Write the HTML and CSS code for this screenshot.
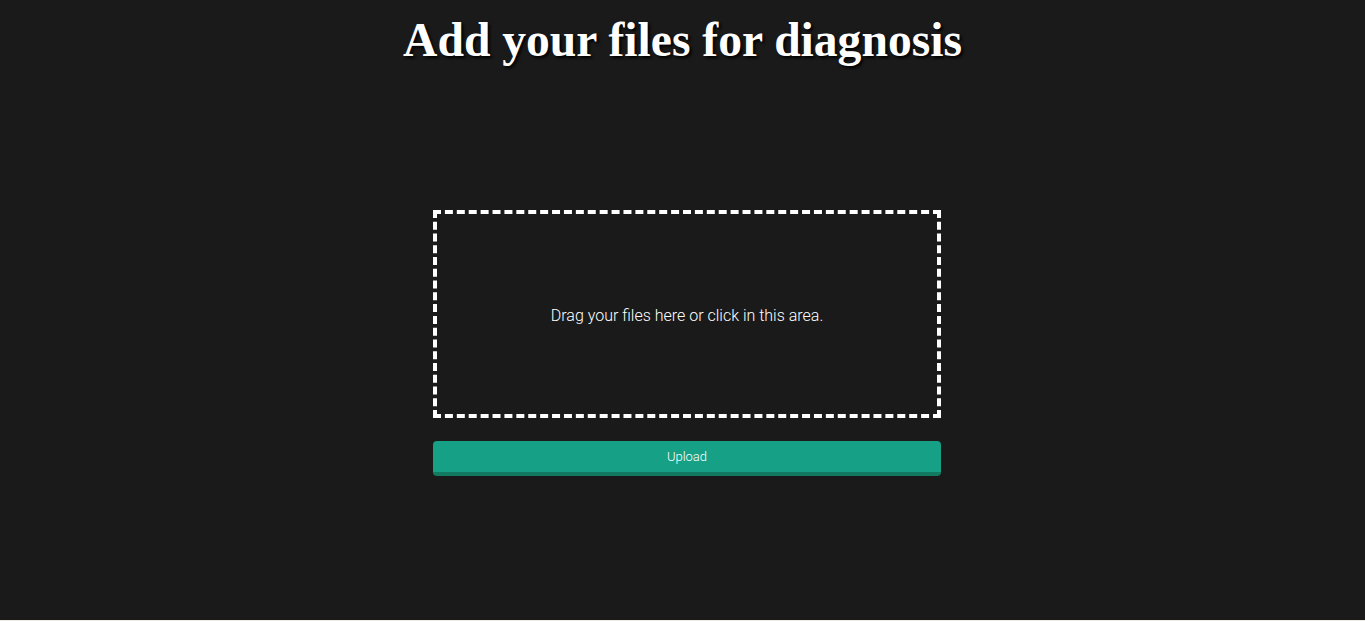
FILE: index.html
```html
<!DOCTYPE html>
<html>
<head>
<meta charset="utf-8">
<link rel="stylesheet" href="styles.css">
</head>
<body>
<div class="page">
  <h1 class="title">Add your files for diagnosis</h1>
  <form class="upload-form">
    <div class="drop-zone">
      <p class="drop-text">Drag your files here or click in this area.</p>
    </div>
    <button type="button" class="upload-btn">Upload</button>
  </form>
</div>
</body>
</html>
```

FILE: styles.css
```css
html {
  background: #eeebe2;
}
body {
  margin: 0;
}
.page {
  background: #1a1a1a;
  height: 620px;
  display: flex;
  flex-direction: column;
  align-items: center;
}
.title {
  margin: 10px 0 0 0;
  font-family: "Liberation Serif", serif;
  font-weight: bold;
  font-size: 47.6px;
  line-height: 60px;
  color: #ffffff;
  text-shadow: 2px 2px 3px #000000;
}
.upload-form {
  margin-top: 140px;
  margin-left: 9px;
  width: 508px;
  display: flex;
  flex-direction: column;
}
.drop-zone {
  height: 200px;
  border: 4px dashed #ffffff;
  display: flex;
  align-items: center;
  justify-content: center;
}
.drop-text {
  margin: 2px 0 0 0;
  color: #ffffff;
  font-family: Roboto, "Liberation Sans", sans-serif;
  font-weight: 300;
  font-size: 16px;
}
.upload-btn {
  margin-top: 23px;
  height: 35px;
  width: 508px;
  padding: 0;
  border: none;
  border-bottom: 4px solid #117a60;
  border-radius: 4px;
  background: #16a085;
  color: #ffffff;
  font-family: Roboto, "Liberation Sans", sans-serif;
  font-weight: 300;
  font-size: 13px;
}
```
